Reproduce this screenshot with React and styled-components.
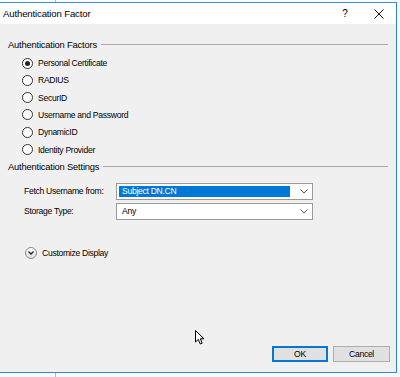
import React from 'react'
import styled, { createGlobalStyle } from 'styled-components'

const GlobalStyle = createGlobalStyle`
  html, body {
    margin: 0;
    padding: 0;
    background: #fbfcfe;
  }
  body {
    font-family: "Liberation Sans", Arial, sans-serif;
    color: #000;
  }
`

const Page = styled.div`
  position: relative;
  width: 400px;
  height: 377px;
  overflow: hidden;
  background:
    linear-gradient(90deg, transparent 55px, #b8b8b8 55px, #b8b8b8 56px, transparent 56px),
    #f6f9fd;
  padding-top: 2px;
  box-sizing: border-box;
`

const Dialog = styled.div`
  width: 396px;
  border-top: 1px solid #3a8ee0;
  border-right: 1px solid #2a86dc;
  border-bottom: 1px solid #2f88dc;
  display: flex;
  flex-direction: column;
  background: #f0f0f0;
`

const TitleBar = styled.div`
  height: 21px;
  background: #fff;
  display: flex;
  align-items: center;
  padding-left: 3px;
  font-size: 9.6px;
  letter-spacing: -0.15px;
`

const Title = styled.span`
  flex: 1;
`

const TitleButton = styled.span`
  width: 34px;
  display: flex;
  justify-content: center;
  align-items: center;
  font-size: 10px;
`

const Body = styled.div`
  height: 348px;
  display: flex;
  flex-direction: column;
  padding-top: 13px;
  box-sizing: border-box;
  font-size: 8.6px;
  letter-spacing: -0.3px;
`

const GroupHeader = styled.div`
  height: 14px;
  display: flex;
  align-items: center;
  gap: 4px;
  padding: 0 8px;
  margin-top: ${p => p.$top || 0}px;
  font-size: 9.4px;
  letter-spacing: -0.2px;
  white-space: nowrap;

  &::after {
    content: '';
    flex: 1;
    height: 1px;
    background: #a8a8a8;
  }
`

const RadioList = styled.div`
  display: flex;
  flex-direction: column;
  margin-top: 3.4px;
  padding-left: 22px;
`

const RadioRow = styled.label`
  height: 17.3px;
  display: flex;
  align-items: center;
  gap: 5px;
`

const RadioCircle = styled.span`
  width: 9px;
  height: 9px;
  border: 1px solid #333;
  border-radius: 50%;
  background: #fff;
  display: flex;
  align-items: center;
  justify-content: center;

  &::after {
    content: '';
    width: 5px;
    height: 5px;
    border-radius: 50%;
    background: ${p => (p.$checked ? '#222' : 'transparent')};
  }
`

const Form = styled.div`
  display: flex;
  flex-direction: column;
  gap: 3px;
  margin-top: 9px;
  padding-left: 24px;
`

const FieldRow = styled.div`
  display: flex;
  align-items: center;
  height: 17px;
`

const FieldLabel = styled.span`
  width: 92px;
`

const Select = styled.div`
  width: 197px;
  height: 17px;
  box-sizing: border-box;
  border: 1px solid #9a9a9a;
  background: #fff;
  display: flex;
  align-items: center;
  padding: 2px;
  gap: 4px;
`

const SelectValue = styled.span`
  flex: 1;
  height: 11px;
  display: flex;
  align-items: center;
  padding-left: 3px;
  background: ${p => (p.$focused ? '#0078d7' : 'transparent')};
  color: ${p => (p.$focused ? '#fff' : '#000')};
  margin-right: ${p => (p.$focused ? '6px' : '0')};
`

const Chevron = styled.svg`
  width: 8px;
  height: 5px;
  margin-right: 2px;
  flex-shrink: 0;
`

const Expander = styled.div`
  display: flex;
  align-items: center;
  gap: 5px;
  height: 14px;
  margin-top: 26px;
  padding-left: 25px;
`

const ExpandIcon = styled.span`
  width: 10px;
  height: 10px;
  border: 1px solid #8c8c8c;
  border-radius: 50%;
  background: linear-gradient(#ffffff, #dcdcdc);
  display: flex;
  align-items: center;
  justify-content: center;
`

const Footer = styled.div`
  margin-top: auto;
  display: flex;
  justify-content: flex-end;
  gap: 5px;
  padding: 0 6px 10px 0;
`

const Button = styled.button`
  width: ${p => p.$width}px;
  height: 16px;
  box-sizing: border-box;
  padding: 0;
  font-family: "Liberation Sans", Arial, sans-serif;
  font-size: 8.6px;
  letter-spacing: -0.3px;
  color: #000;
  background: #e1e1e1;
  border: 1px solid ${p => (p.$default ? '#0078d7' : '#adadad')};
  box-shadow: ${p => (p.$default ? 'inset 0 0 0 1px #0078d7' : 'none')};
`

const Cursor = styled.svg`
  position: absolute;
  left: 195px;
  top: 330px;
  width: 11px;
  height: 15px;
`

const factors = [
  'Personal Certificate',
  'RADIUS',
  'SecurID',
  'Username and Password',
  'DynamicID',
  'Identity Provider',
]

const DownChevron = () => (
  <Chevron viewBox="0 0 8 5">
    <path d="M0.5 0.5 L4 4 L7.5 0.5" fill="none" stroke="#555" strokeWidth="1" />
  </Chevron>
)

const App = () => {
  return (
    <Page>
      <GlobalStyle />
      <Dialog>
        <TitleBar>
          <Title>Authentication Factor</Title>
          <TitleButton>?</TitleButton>
          <TitleButton>
            <svg width="10" height="10" viewBox="0 0 10 10">
              <path d="M0.5 0.5 L9.5 9.5 M9.5 0.5 L0.5 9.5" stroke="#111" strokeWidth="1" />
            </svg>
          </TitleButton>
        </TitleBar>
        <Body>
          <GroupHeader>Authentication Factors</GroupHeader>
          <RadioList>
            {factors.map((f, i) => (
              <RadioRow key={f}>
                <RadioCircle $checked={i === 0} />
                {f}
              </RadioRow>
            ))}
          </RadioList>
          <GroupHeader $top={1.8}>Authentication Settings</GroupHeader>
          <Form>
            <FieldRow>
              <FieldLabel>Fetch Username from:</FieldLabel>
              <Select>
                <SelectValue $focused>Subject DN.CN</SelectValue>
                <DownChevron />
              </Select>
            </FieldRow>
            <FieldRow>
              <FieldLabel>Storage Type:</FieldLabel>
              <Select>
                <SelectValue>Any</SelectValue>
                <DownChevron />
              </Select>
            </FieldRow>
          </Form>
          <Expander>
            <ExpandIcon>
              <svg width="6" height="4" viewBox="0 0 6 4">
                <path d="M0.5 0.5 L3 3 L5.5 0.5" fill="none" stroke="#222" strokeWidth="1.3" />
              </svg>
            </ExpandIcon>
            Customize Display
          </Expander>
          <Footer>
            <Button $width={56} $default>OK</Button>
            <Button $width={57}>Cancel</Button>
          </Footer>
        </Body>
      </Dialog>
      <Cursor viewBox="0 0 11 15">
        <path d="M0.5 0.5 L0.5 12 L3.3 9.4 L5.3 14 L7.2 13.2 L5.3 8.8 L9 8.8 Z" fill="#fff" stroke="#000" strokeWidth="1" strokeLinejoin="round" />
      </Cursor>
    </Page>
  )
}

export default App
